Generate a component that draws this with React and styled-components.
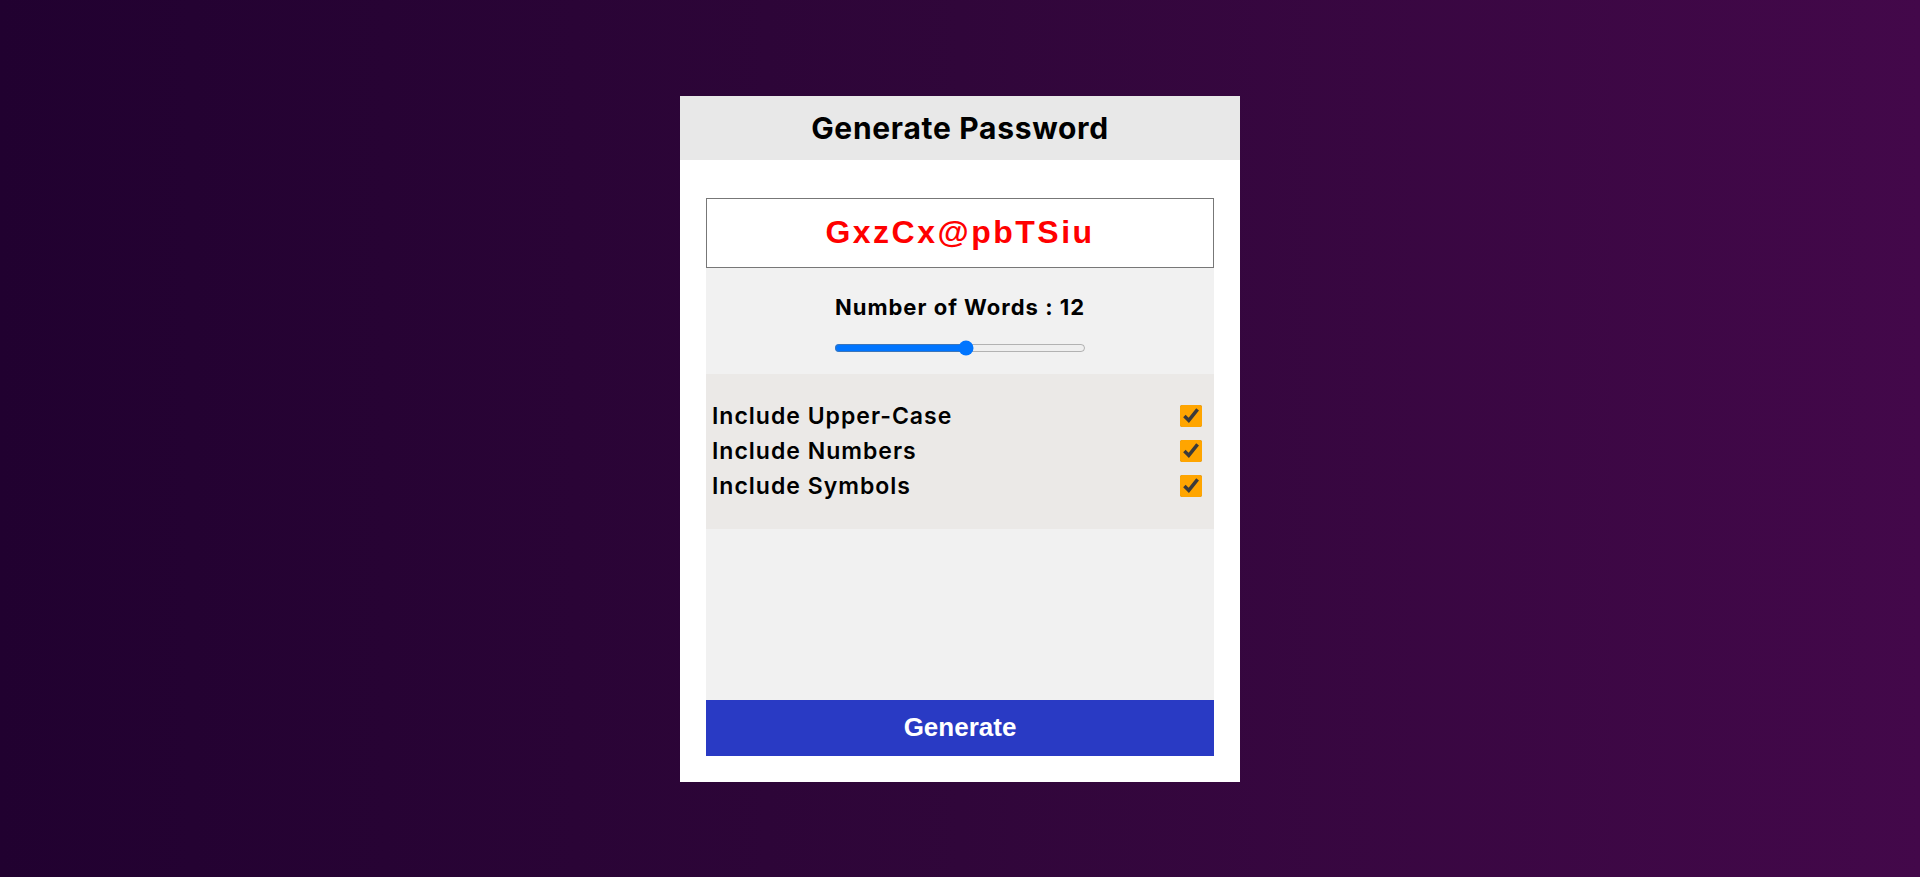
import React, { useState } from 'react';
import styled, { createGlobalStyle } from 'styled-components';

const GlobalStyle = createGlobalStyle`
  * {
    box-sizing: border-box;
  }

  html,
  body {
    margin: 0;
    padding: 0;
  }

  body {
    font-family: Inter, 'Open Sans', sans-serif;
  }
`;

const Page = styled.div`
  min-height: 877px;
  display: flex;
  align-items: center;
  justify-content: center;
  background: linear-gradient(90deg, #210130 0%, #30063a 50%, #43084a 100%);
`;

const Card = styled.div`
  width: 560px;
  height: 686px;
  background: #fff;
  display: flex;
  flex-direction: column;
`;

const TitleBar = styled.h1`
  margin: 0;
  height: 64px;
  background: #e8e8e8;
  display: flex;
  align-items: center;
  justify-content: center;
  font-size: 30px;
  font-weight: 700;
  color: #000;
  letter-spacing: 0.7px;
`;

const Body = styled.div`
  flex: 1;
  display: flex;
  flex-direction: column;
  padding: 38px 26px 26px;
`;

const PasswordBox = styled.div`
  height: 70px;
  border: 1px solid #777;
  display: flex;
  align-items: center;
  justify-content: center;
  font-family: 'Liberation Sans', Arial, sans-serif;
  font-size: 32px;
  font-weight: 700;
  letter-spacing: 2.5px;
  color: #ff0000;
`;

const Panel = styled.div`
  flex: 1;
  background: #f1f1f1;
  display: flex;
  flex-direction: column;
`;

const WordsSection = styled.div`
  height: 106px;
  display: flex;
  flex-direction: column;
  align-items: center;
  padding-top: 24px;
`;

const WordsLabel = styled.div`
  font-size: 22px;
  font-weight: 700;
  color: #000;
  line-height: 30px;
  letter-spacing: 1px;
`;

const Slider = styled.input`
  width: 252px;
  margin: 18px 0 0;
  accent-color: #0075ff;
`;

const Options = styled.div`
  height: 155px;
  background: #ebe9e7;
  padding: 25px 12px 25px 6px;
  display: flex;
  flex-direction: column;
`;

const OptionRow = styled.label`
  height: 35px;
  display: flex;
  align-items: center;
  justify-content: space-between;
  font-size: 23px;
  font-weight: 600;
  letter-spacing: 1px;
  color: #000;
`;

const Check = styled.input`
  width: 22px;
  height: 22px;
  margin: 0;
  accent-color: #ffa500;
`;

const GenerateButton = styled.button`
  height: 56px;
  border: none;
  background: #293ac4;
  color: #fff;
  font-family: 'Liberation Sans', Arial, sans-serif;
  font-size: 26px;
  font-weight: 700;
  cursor: pointer;
`;

const options = ['Include Upper-Case', 'Include Numbers', 'Include Symbols'];

const App = () => {
  const [words, setWords] = useState(12);
  const [checked, setChecked] = useState([true, true, true]);

  return (
    <>
      <GlobalStyle />
      <Page>
        <Card>
          <TitleBar>Generate Password</TitleBar>
          <Body>
            <PasswordBox>GxzCx@pbTSiu</PasswordBox>
            <Panel>
              <WordsSection>
                <WordsLabel>Number of Words : {words}</WordsLabel>
                <Slider
                  type="range"
                  min="1"
                  max="22"
                  value={words}
                  onChange={(e) => setWords(Number(e.target.value))}
                />
              </WordsSection>
              <Options>
                {options.map((label, i) => (
                  <OptionRow key={label}>
                    {label}
                    <Check
                      type="checkbox"
                      checked={checked[i]}
                      onChange={() =>
                        setChecked(checked.map((c, j) => (j === i ? !c : c)))
                      }
                    />
                  </OptionRow>
                ))}
              </Options>
            </Panel>
            <GenerateButton>Generate</GenerateButton>
          </Body>
        </Card>
      </Page>
    </>
  );
};

export default App;
